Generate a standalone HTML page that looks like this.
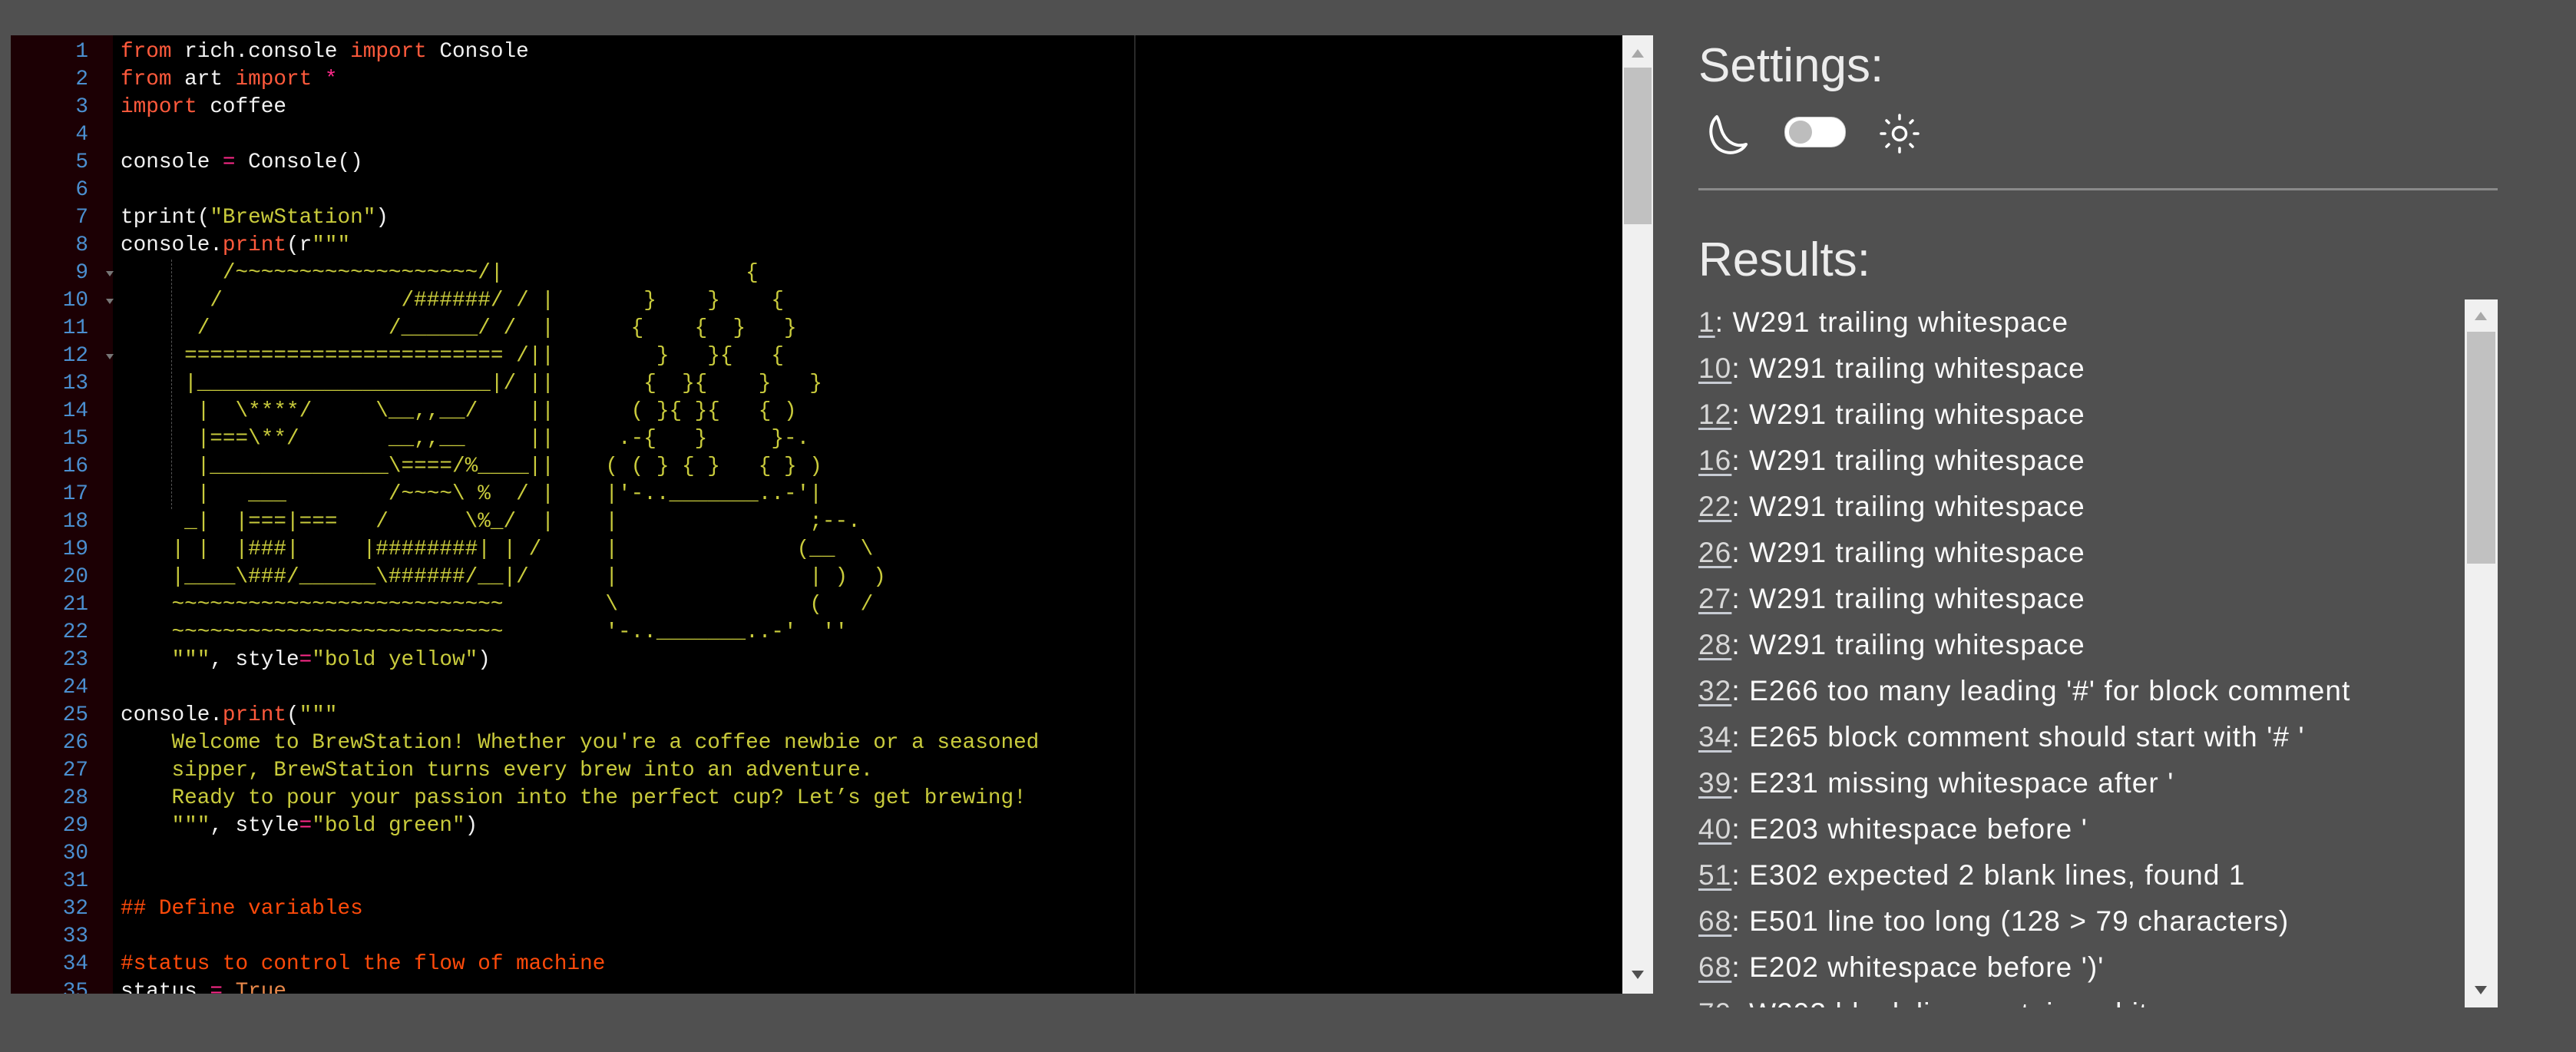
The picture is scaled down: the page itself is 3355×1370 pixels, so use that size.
<!DOCTYPE html>
<html><head><meta charset="utf-8"><style>
html,body{margin:0;padding:0;width:3355px;height:1370px;background:#505050;overflow:hidden;}
#ed{position:absolute;left:14px;top:46px;width:2099px;height:1248px;background:#000;overflow:hidden;}
#gut{position:absolute;left:0;top:0;width:133px;height:100%;background:#1c0004;}
pre{margin:0;font-family:"Liberation Mono",monospace;font-size:27.7px;line-height:36px;}
#nums{position:absolute;left:0;top:4px;width:101px;text-align:right;color:#4b8fd0;}
#code{position:absolute;left:143px;top:4px;color:#f2f2f2;white-space:pre;}
.k{color:#ff5a3c}.s{color:#c9cb3c}.e{color:#ff2a8a}.c{color:#ff4a0a}.t{color:#e8884a}
.fold{position:absolute;left:124px;width:0;height:0;border-left:5px solid transparent;border-right:5px solid transparent;border-top:7px solid #777;}
#guide{position:absolute;left:209px;top:292px;height:325px;border-left:1px dashed #555;}
#margin{position:absolute;left:1463px;top:0;width:2px;height:100%;background:#2a2a2a;}
#vs{position:absolute;left:2113px;top:46px;width:40px;height:1248px;background:#f0f0f0;}
#vs .th{position:absolute;left:2px;top:42px;width:36px;height:204px;background:#c1c1c1;}
.up{position:absolute;width:0;height:0;border-left:8px solid transparent;border-right:8px solid transparent;}
#side{position:absolute;left:2212px;top:0;font-family:"Liberation Sans",sans-serif;color:#ececec;}
h1{position:absolute;margin:0;font-weight:normal;font-size:62px;left:0;white-space:nowrap;}
#div{position:absolute;left:2212px;top:245px;width:1041px;height:3px;background:#8a8a8a;}
#res{position:absolute;left:2212px;top:390px;width:990px;height:922px;overflow:hidden;font-family:"Liberation Sans",sans-serif;font-size:37px;color:#fafafa;letter-spacing:1.1px;}
#res div{height:60px;line-height:60px;white-space:nowrap;}
#res u{color:#d8d8d8;text-decoration-color:#c8ccd4;text-decoration-thickness:3px;text-underline-offset:5px;}
#rs{position:absolute;left:3210px;top:390px;width:43px;height:922px;background:#f0f0f0;}
#rs .th{position:absolute;left:3px;top:42px;width:37px;height:302px;background:#c1c1c1;}
</style></head><body>
<div id="ed">
<div id="gut"></div>
<pre id="nums">1
2
3
4
5
6
7
8
9
10
11
12
13
14
15
16
17
18
19
20
21
22
23
24
25
26
27
28
29
30
31
32
33
34
35</pre>
<div class="fold" style="top:307px"></div>
<div class="fold" style="top:343px"></div>
<div class="fold" style="top:415px"></div>
<div id="guide"></div>
<div id="margin"></div>
<pre id="code"><span class="k">from</span> rich.console <span class="k">import</span> Console
<span class="k">from</span> art <span class="k">import</span> <span class="e">*</span>
<span class="k">import</span> coffee

console <span class="e">=</span> Console()

tprint(<span class="s">"BrewStation"</span>)
console.<span class="k">print</span>(r<span class="s">"""</span>
<span class="s">        /~~~~~~~~~~~~~~~~~~~/|                   {</span>
<span class="s">       /              /######/ / |       }    }    {</span>
<span class="s">      /              /______/ /  |      {    {  }   }</span>
<span class="s">     ========================= /||        }   }{   {</span>
<span class="s">     |_______________________|/ ||       {  }{    }   }</span>
<span class="s">      |  \****/     \__,,__/    ||      ( }{ }{   { )</span>
<span class="s">      |===\**/       __,,__     ||     .-{   }     }-.</span>
<span class="s">      |______________\====/%____||    ( ( } { }   { } )</span>
<span class="s">      |   ___        /~~~~\ %  / |    |'-.._______..-'|</span>
<span class="s">     _|  |===|===   /      \%_/  |    |               ;--.</span>
<span class="s">    | |  |###|     |########| | /     |              (__  \</span>
<span class="s">    |____\###/______\######/__|/      |               | )  )</span>
<span class="s">    ~~~~~~~~~~~~~~~~~~~~~~~~~~        \               (   /</span>
<span class="s">    ~~~~~~~~~~~~~~~~~~~~~~~~~~        '-.._______..-'  ''</span>
<span class="s">    """</span>, style<span class="e">=</span><span class="s">"bold yellow"</span>)

console.<span class="k">print</span>(<span class="s">"""</span>
<span class="s">    Welcome to BrewStation! Whether you're a coffee newbie or a seasoned</span>
<span class="s">    sipper, BrewStation turns every brew into an adventure.</span>
<span class="s">    Ready to pour your passion into the perfect cup? Let’s get brewing!</span>
<span class="s">    """</span>, style<span class="e">=</span><span class="s">"bold green"</span>)


<span class="c">## Define variables</span>

<span class="c">#status to control the flow of machine</span>
status <span class="e">=</span> <span class="t">True</span></pre>
</div>
<div id="vs"><div class="th"></div>
<div class="up" style="left:12px;top:18px;border-bottom:11px solid #a8a8a8"></div>
<div class="up" style="left:12px;top:1218px;border-top:11px solid #505050"></div>
</div>

<div id="side">
<h1 style="top:50px">Settings:</h1>
<h1 style="top:303px">Results:</h1>
</div>
<svg style="position:absolute;left:2222px;top:148px" width="60" height="56" viewBox="0 0 60 56">
<path d="M14 4 C2 14 4 40 20 48 C32 54 46 50 52 40 C40 44 28 38 22 26 C18 18 18 10 14 4 Z" fill="none" stroke="#fff" stroke-width="4" stroke-linejoin="round"/>
</svg>
<div style="position:absolute;left:2324px;top:152px;width:78px;height:38px;border-radius:19px;background:#fff;border:1px solid #ccc;">
<div style="position:absolute;left:5px;top:4px;width:30px;height:30px;border-radius:15px;background:#bdbdbd"></div></div>
<svg style="position:absolute;left:2446px;top:146px" width="56" height="56" viewBox="0 0 56 56">
<circle cx="28" cy="28" r="8.5" fill="none" stroke="#fff" stroke-width="3.5"/>
<g stroke="#fff" stroke-width="3.5" stroke-linecap="round">
<line x1="28" y1="4" x2="28" y2="9"/><line x1="28" y1="47" x2="28" y2="52"/>
<line x1="4" y1="28" x2="9" y2="28"/><line x1="47" y1="28" x2="52" y2="28"/>
<line x1="11" y1="11" x2="14" y2="14"/><line x1="42" y1="42" x2="45" y2="45"/>
<line x1="11" y1="45" x2="14" y2="42"/><line x1="42" y1="14" x2="45" y2="11"/>
</g></svg>
<div id="div"></div>
<div id="res">
<div><u>1</u>: W291 trailing whitespace</div>
<div><u>10</u>: W291 trailing whitespace</div>
<div><u>12</u>: W291 trailing whitespace</div>
<div><u>16</u>: W291 trailing whitespace</div>
<div><u>22</u>: W291 trailing whitespace</div>
<div><u>26</u>: W291 trailing whitespace</div>
<div><u>27</u>: W291 trailing whitespace</div>
<div><u>28</u>: W291 trailing whitespace</div>
<div><u>32</u>: E266 too many leading '#' for block comment</div>
<div><u>34</u>: E265 block comment should start with '# '</div>
<div><u>39</u>: E231 missing whitespace after '</div>
<div><u>40</u>: E203 whitespace before '</div>
<div><u>51</u>: E302 expected 2 blank lines, found 1</div>
<div><u>68</u>: E501 line too long (128 &gt; 79 characters)</div>
<div><u>68</u>: E202 whitespace before ')'</div>
<div><u>70</u>: W293 blank line contains whitespace</div>
</div>
<div id="rs"><div class="th"></div>
<div class="up" style="left:13px;top:16px;border-bottom:11px solid #a8a8a8"></div>
<div class="up" style="left:13px;top:894px;border-top:11px solid #505050"></div>
</div>
</body></html>
